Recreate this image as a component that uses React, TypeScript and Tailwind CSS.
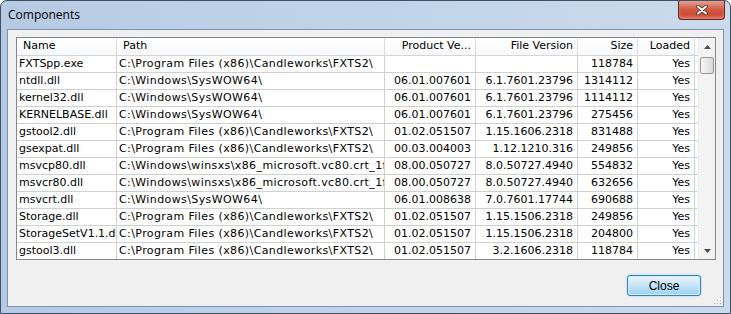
import React from "react";

type Row = [string, string, string, string, string, string];

const FXTS = "C:\\Program Files (x86)\\Candleworks\\FXTS2\\";
const WOW = "C:\\Windows\\SysWOW64\\";
const SXS = "C:\\Windows\\winsxs\\x86_microsoft.vc80.crt_1fc8b3b9a1e18e3b_8.0.50727.4940_none\\";

const rows: Row[] = [
  ["FXTSpp.exe", FXTS, "", "", "118784", "Yes"],
  ["ntdll.dll", WOW, "06.01.007601", "6.1.7601.23796", "1314112", "Yes"],
  ["kernel32.dll", WOW, "06.01.007601", "6.1.7601.23796", "1114112", "Yes"],
  ["KERNELBASE.dll", WOW, "06.01.007601", "6.1.7601.23796", "275456", "Yes"],
  ["gstool2.dll", FXTS, "01.02.051507", "1.15.1606.2318", "831488", "Yes"],
  ["gsexpat.dll", FXTS, "00.03.004003", "1.12.1210.316", "249856", "Yes"],
  ["msvcp80.dll", SXS, "08.00.050727", "8.0.50727.4940", "554832", "Yes"],
  ["msvcr80.dll", SXS, "08.00.050727", "8.0.50727.4940", "632656", "Yes"],
  ["msvcrt.dll", WOW, "06.01.008638", "7.0.7601.17744", "690688", "Yes"],
  ["Storage.dll", FXTS, "01.02.051507", "1.15.1506.2318", "249856", "Yes"],
  ["StorageSetV1.1.dll", FXTS, "01.02.051507", "1.15.1506.2318", "204800", "Yes"],
  ["gstool3.dll", FXTS, "01.02.051507", "3.2.1606.2318", "118784", "Yes"],
];

// column widths include the 1px grid line on the right
const widths = ["w-[100px]", "w-[268px]", "w-[91px]", "w-[102px]", "w-[60px]", "w-[57px]"];
const headers = ["Name", "Path", "Product Ve...", "File Version", "Size", "Loaded"];

function ScrollArrow({ up }: { up?: boolean }) {
  return (
    <div className="h-[17px] flex items-center justify-center">
      <svg width="7" height="4" viewBox="0 0 7 4">
        <path d={up ? "M0 4 L3.5 0 L7 4 Z" : "M0 0 L3.5 4 L7 0 Z"} fill="#4d4d4d" />
      </svg>
    </div>
  );
}

function ListView() {
  return (
    <div className="h-[223px] flex border border-[#828790] bg-white overflow-hidden">
      <div className="flex-1 flex flex-col overflow-hidden">
        {/* header */}
        <div className="flex h-[18px] shrink-0 border-b border-[#d5d5d5] bg-linear-to-b from-white to-[#f7f8fa]">
          {headers.map((h, i) => (
            <div
              key={h}
              className={`${widths[i]} shrink-0 border-r border-[#dcdcdc] flex items-center whitespace-nowrap overflow-hidden ${
                i < 2 ? "pl-[6px]" : "justify-end pr-[4px]"
              }`}
            >
              {h}
            </div>
          ))}
        </div>

        {/* rows */}
        {rows.map((r, ri) => (
          <div key={ri} className="flex h-[17px] shrink-0 border-b border-[#d0d0d0]">
            {r.map((c, i) => (
              <div
                key={i}
                className={`${widths[i]} shrink-0 border-r border-[#d0d0d0] flex items-center whitespace-nowrap overflow-hidden ${
                  i === 0 ? "pl-[2px]" : i === 1 ? "pl-[2px] tracking-[0.4px]" : "justify-end pr-[4px]"
                }`}
              >
                {c}
              </div>
            ))}
          </div>
        ))}
      </div>

      {/* vertical scrollbar */}
      <div className="w-[17px] shrink-0 flex flex-col bg-[#f3f3f3] border-l border-[#ececec]">
        <ScrollArrow up />
        <div className="mx-[1px] mt-[2px] h-[17px] rounded-[2px] border border-[#979797] bg-linear-to-r from-[#f5f5f5] to-[#d9d9d9]" />
        <div className="flex-1" />
        <ScrollArrow />
      </div>
    </div>
  );
}

export default function App() {
  return (
    <div className="w-[731px] h-[314px] flex flex-col border border-[#3f5068] rounded-t-[7px] bg-linear-to-r from-[#b6cbe3] to-[#cbdbed] text-black">
      {/* title bar */}
      <div className="h-[28px] shrink-0 flex items-start">
        <span className="pl-[7px] pt-[6px] text-[12px] leading-[16px] font-['Open_Sans',sans-serif]">
          Components
        </span>
        <div className="ml-auto mr-[5px] w-[47px] h-[19px] rounded-b-[4px] border border-t-0 border-[#5e2a26] bg-linear-to-b from-[#e6a193] via-[#d0563f] to-[#c6472f] flex items-center justify-center shadow-[inset_0_-2px_3px_#e8806c]">
          <svg width="12" height="10" viewBox="0 0 12 10">
            <path d="M2 1.5 L10 8.5 M10 1.5 L2 8.5" stroke="#4a2420" strokeWidth="3.6" strokeLinecap="round" />
            <path d="M2 1.5 L10 8.5 M10 1.5 L2 8.5" stroke="#ffffff" strokeWidth="2" strokeLinecap="round" />
          </svg>
        </div>
      </div>

      {/* client area */}
      <div className="relative mx-[6px] mb-[6px] flex-1 flex flex-col border border-[#7f93ad] bg-[#f0f0f0] pt-[7px] pl-[8px] pr-[7px] text-[11px] font-['DejaVu_Sans',sans-serif]">
        <ListView />

        <div className="flex justify-end mt-[15px] pr-[15px]">
          <button className="w-[74px] h-[21px] rounded-[3px] border border-[#3c7fb1] bg-linear-to-b from-[#eaf6fd] via-[#c4e4f6] to-[#9cd2f0] shadow-[inset_0_0_0_1px_#cdeefc,0_0_2px_#7fcdf3] text-[12px] font-['Liberation_Sans',sans-serif] text-black">
            Close
          </button>
        </div>

        {/* size grip */}
        <svg className="absolute right-[1px] bottom-[1px]" width="10" height="10" viewBox="0 0 10 10">
          <rect x="8" y="2" width="1" height="1" fill="#b8b8b8" />
          <rect x="5" y="5" width="1" height="1" fill="#b8b8b8" />
          <rect x="8" y="5" width="1" height="1" fill="#b8b8b8" />
          <rect x="2" y="8" width="1" height="1" fill="#b8b8b8" />
          <rect x="5" y="8" width="1" height="1" fill="#b8b8b8" />
          <rect x="8" y="8" width="1" height="1" fill="#b8b8b8" />
        </svg>
      </div>
    </div>
  );
}
